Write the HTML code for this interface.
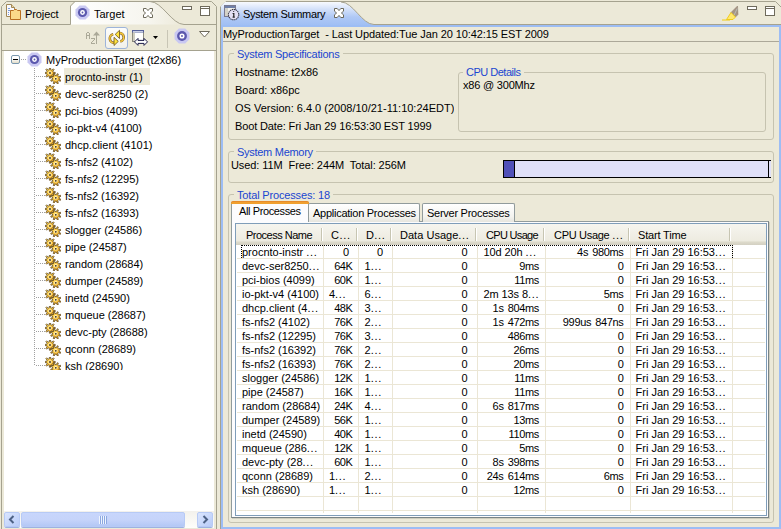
<!DOCTYPE html>
<html><head><meta charset="utf-8">
<style>
*{margin:0;padding:0;box-sizing:border-box}
html,body{width:781px;height:529px;overflow:hidden;background:#ECE9D8;font-family:"Liberation Sans",sans-serif;font-size:11px;color:#000;position:relative}
.a{position:absolute}
.t{position:absolute;white-space:nowrap;line-height:13px}
</style></head><body>
<svg width="0" height="0" style="position:absolute"><defs>
<linearGradient id="gy" x1="0" y1="0" x2="1" y2="1"><stop offset="0" stop-color="#FFE468"/><stop offset="1" stop-color="#F2A41C"/></linearGradient>
<g id="tgt"><path d="M4.5,0.5 H10.5 L14.5,4.5 V10.5 L10.5,14.5 H4.5 L0.5,10.5 V4.5 Z" fill="#C9C8F2"/><circle cx="7.5" cy="7.5" r="4.6" fill="#5B58AE"/><circle cx="7.5" cy="7.5" r="2.4" fill="#fff"/><circle cx="7.5" cy="7.5" r="0.9" fill="#5B58AE"/></g>
<g id="gear"><path d="M8.33,4.34 L10.27,4.43 L10.27,5.57 L8.33,5.66 L7.83,6.89 L9.13,8.32 L8.32,9.13 L6.89,7.83 L5.66,8.33 L5.57,10.27 L4.43,10.27 L4.34,8.33 L3.11,7.83 L1.68,9.13 L0.87,8.32 L2.17,6.89 L1.67,5.66 L-0.27,5.57 L-0.27,4.43 L1.67,4.34 L2.17,3.11 L0.87,1.68 L1.68,0.87 L3.11,2.17 L4.34,1.67 L4.43,-0.27 L5.57,-0.27 L5.66,1.67 L6.89,2.17 L8.32,0.87 L9.13,1.68 L7.83,3.11Z" fill="url(#gy)" stroke="#4A3410" stroke-width="0.7"/><circle cx="5" cy="5" r="1.8" fill="#FFF2B8"/><circle cx="5" cy="5" r="0.9" fill="#3A2A10"/><path d="M14.13,11.46 L15.89,12.29 L15.45,13.34 L13.63,12.69 L12.69,13.63 L13.34,15.45 L12.29,15.89 L11.46,14.13 L10.14,14.13 L9.31,15.89 L8.26,15.45 L8.91,13.63 L7.97,12.69 L6.15,13.34 L5.71,12.29 L7.47,11.46 L7.47,10.14 L5.71,9.31 L6.15,8.26 L7.97,8.91 L8.91,7.97 L8.26,6.15 L9.31,5.71 L10.14,7.47 L11.46,7.47 L12.29,5.71 L13.34,6.15 L12.69,7.97 L13.63,8.91 L15.45,8.26 L15.89,9.31 L14.13,10.14Z" fill="url(#gy)" stroke="#4A3410" stroke-width="0.7"/><circle cx="10.8" cy="10.8" r="1.8" fill="#FFF2B8"/><circle cx="10.8" cy="10.8" r="0.9" fill="#3A2A10"/></g>
</defs></svg>
<svg class="a" style="left:0;top:0" width="219" height="529">
<defs><linearGradient id="tg" x1="0" y1="0" x2="1" y2="0"><stop offset="0" stop-color="#fff"/><stop offset="0.7" stop-color="#F6F5EE"/><stop offset="1" stop-color="#ECE9D8"/></linearGradient></defs>
<path d="M1.5,529 V6.5 L6.5,1.5 H211.5 L216.5,6.5 V529" fill="none" stroke="#A5A28F"/>
<path d="M71,24.5 V6 L75,2 H150 C162,2 172,24.5 184,24.5 Z" fill="url(#tg)"/>
<path d="M1.5,24.5 H70.5 V6 L75,1.5" fill="none" stroke="#A5A28F"/><path d="M150,1.5 C162,1.5 172,24.5 184,24.5 H216.5" fill="none" stroke="#A5A28F"/>
</svg>
<svg class="a" style="left:6px;top:4px" width="16" height="17" viewBox="0 0 16 17">
<path d="M0.5,0.5 H5.5 L8.5,3.5 V12.5 H0.5 Z" fill="#F8F8FF" stroke="#A08858"/>
<path d="M5.5,0.5 V3.5 H8.5" fill="#EED8A0" stroke="#A08858"/>
<path d="M2,4.5 H4 M2,6.5 H5 M2,8.5 H3 M2,10.5 H3" stroke="#7C9CD8"/>
<path d="M4.5,6.5 H7.5 L8.5,5.5 H10.5 L11.5,6.5 H14.5 V15.5 H4.5 Z" fill="#FBD98A" stroke="#B86E20"/>
</svg>
<div class="t" style="top:8px;left:25px;letter-spacing:-0.100px;">Project</div>
<svg class="a" style="left:75px;top:5px" width="15" height="15" viewBox="0 0 15 15"><use href="#tgt"/></svg>
<div class="t" style="top:8px;left:94px;">Target</div>
<svg class="a" style="left:143px;top:8px" width="10" height="10" viewBox="0 0 10 10">
<path d="M0.5,0.5 H3.2 L5,2.6 L6.8,0.5 H9.5 V3.2 L7.4,5 L9.5,6.8 V9.5 H6.8 L5,7.4 L3.2,9.5 H0.5 V6.8 L2.6,5 L0.5,3.2 Z" fill="#fff" stroke="#5E5A4A" stroke-width="0.9"/>
</svg>
<div class="a" style="left:182px;top:6px;width:10px;height:4px;border:1px solid #6E6A5C;background:#fff"></div>
<div class="a" style="left:200px;top:6px;width:10px;height:10px;border:1px solid #6E6A5C;background:#fff;box-shadow:inset 0 1px 0 #fff,inset 0 2px 0 #6E6A5C"></div>
<svg class="a" style="left:85px;top:31px" width="16" height="14" viewBox="0 0 16 14" shape-rendering="crispEdges">
<g fill="#ABA998">
<rect x="1" y="2" width="1" height="6"/><rect x="4" y="2" width="1" height="6"/><rect x="2" y="1" width="2" height="1"/><rect x="2" y="4" width="2" height="1"/>
<rect x="6" y="7" width="4" height="1"/><rect x="6" y="12" width="4" height="1"/><rect x="9" y="8" width="1" height="1"/><rect x="8" y="9" width="1" height="1"/><rect x="7" y="10" width="1" height="1"/><rect x="6" y="11" width="1" height="1"/>
<rect x="11" y="3" width="1" height="10"/>
</g>
<path d="M8,4.5 L11.5,0.5 L15,4.5 Z" fill="#ABA998" shape-rendering="auto"/>
</svg>
<div class="a" style="left:105px;top:27px;width:23px;height:22px;border:1px solid #9DB4DA;border-radius:3px;background:linear-gradient(#FDFDFB,#F2F1EA)"></div>
<svg class="a" style="left:108px;top:29px" width="17" height="17" viewBox="0 0 17 17">
<g id="sarr">
<path d="M11.2,4 A4.3,4.3 0 0 1 12.3,12.5" stroke="#8A6A30" stroke-width="2.6" fill="none"/>
<path d="M11.2,4 A4.3,4.3 0 0 1 12.3,12.5" stroke="#F5C838" stroke-width="1.3" fill="none"/>
<path d="M11.5,1.3 L7.2,5.4 L11.5,9.5 Z" fill="#FFE43C" stroke="#6A5020" stroke-width="0.8" stroke-linejoin="round"/>
</g>
<use href="#sarr" transform="rotate(180 8.75 8.9)"/>
</svg>
<svg class="a" style="left:132px;top:29px" width="17" height="18" viewBox="0 0 17 18">
<rect x="0.5" y="1.5" width="11" height="11" fill="#fff" stroke="#8C8A7E"/>
<rect x="0" y="1" width="12" height="2.5" fill="#55609A"/>
<rect x="1" y="2" width="10" height="0.8" fill="#E8ECF8"/>
<rect x="1" y="3.5" width="2" height="8.5" fill="#CFCDBF"/>
<path d="M2.5,12.9 L6,9.4 V11.4 H12 V9.4 L15.5,12.9 L12,16.4 V14.4 H6 V16.4 Z" fill="#fff" stroke="#1E1E4A" stroke-linejoin="miter"/>
</svg>
<svg class="a" style="left:153px;top:36px" width="6" height="3"><path d="M0,0 H5 L2.5,3 Z" fill="#000"/></svg>
<div class="a" style="left:167px;top:30px;width:1px;height:18px;background:#C8C5B5"></div>
<svg class="a" style="left:174px;top:28px" width="16" height="16" viewBox="0 0 15 15"><use href="#tgt"/></svg>
<svg class="a" style="left:199px;top:31px" width="12" height="7"><path d="M0.5,0.5 H10.5 L5.5,6 Z" fill="#fff" stroke="#6E6A5C"/></svg>
<div class="a" style="left:2px;top:50px;width:214px;height:1px;background:#A5A28F"></div>
<div class="a" style="left:4px;top:51px;width:210px;height:461px;background:#fff"></div>
<div class="a" style="left:0;top:0;width:214px;height:370px;overflow:hidden">
<div class="a" style="left:11px;top:55px;width:9px;height:9px;border:1px solid #7A98AF;border-radius:2px;background:linear-gradient(#fff 40%,#E2DCC8)"></div>
<div class="a" style="left:13px;top:59px;width:5px;height:1px;background:#000"></div>
<div class="a" style="left:21px;top:59px;width:6px;height:1px;background:repeating-linear-gradient(90deg,#A0A0A0 0 1px,transparent 1px 2px)"></div>
<svg class="a" style="left:27px;top:52px" width="15" height="15" viewBox="0 0 15 15"><use href="#tgt"/></svg>
<div class="t" style="top:54px;left:46px;">MyProductionTarget (t2x86)</div>
<div class="a" style="left:34px;top:68px;width:1px;height:298px;background:repeating-linear-gradient(#A0A0A0 0 1px,transparent 1px 2px)"></div>
<div class="a" style="left:36px;top:76px;width:9px;height:1px;background:repeating-linear-gradient(90deg,#A0A0A0 0 1px,transparent 1px 2px)"></div>
<svg class="a" style="left:45px;top:68px" width="16" height="16" viewBox="0 0 16 16"><use href="#gear"/></svg>
<div class="a" style="left:64px;top:68px;width:86px;height:17px;background:#ECE9D8"></div>
<div class="t" style="top:71px;left:65px;">procnto-instr (1)</div>
<div class="a" style="left:36px;top:93px;width:9px;height:1px;background:repeating-linear-gradient(90deg,#A0A0A0 0 1px,transparent 1px 2px)"></div>
<svg class="a" style="left:45px;top:85px" width="16" height="16" viewBox="0 0 16 16"><use href="#gear"/></svg>
<div class="t" style="top:88px;left:65px;">devc-ser8250 (2)</div>
<div class="a" style="left:36px;top:110px;width:9px;height:1px;background:repeating-linear-gradient(90deg,#A0A0A0 0 1px,transparent 1px 2px)"></div>
<svg class="a" style="left:45px;top:102px" width="16" height="16" viewBox="0 0 16 16"><use href="#gear"/></svg>
<div class="t" style="top:105px;left:65px;">pci-bios (4099)</div>
<div class="a" style="left:36px;top:127px;width:9px;height:1px;background:repeating-linear-gradient(90deg,#A0A0A0 0 1px,transparent 1px 2px)"></div>
<svg class="a" style="left:45px;top:119px" width="16" height="16" viewBox="0 0 16 16"><use href="#gear"/></svg>
<div class="t" style="top:122px;left:65px;">io-pkt-v4 (4100)</div>
<div class="a" style="left:36px;top:144px;width:9px;height:1px;background:repeating-linear-gradient(90deg,#A0A0A0 0 1px,transparent 1px 2px)"></div>
<svg class="a" style="left:45px;top:136px" width="16" height="16" viewBox="0 0 16 16"><use href="#gear"/></svg>
<div class="t" style="top:139px;left:65px;">dhcp.client (4101)</div>
<div class="a" style="left:36px;top:161px;width:9px;height:1px;background:repeating-linear-gradient(90deg,#A0A0A0 0 1px,transparent 1px 2px)"></div>
<svg class="a" style="left:45px;top:153px" width="16" height="16" viewBox="0 0 16 16"><use href="#gear"/></svg>
<div class="t" style="top:156px;left:65px;">fs-nfs2 (4102)</div>
<div class="a" style="left:36px;top:178px;width:9px;height:1px;background:repeating-linear-gradient(90deg,#A0A0A0 0 1px,transparent 1px 2px)"></div>
<svg class="a" style="left:45px;top:170px" width="16" height="16" viewBox="0 0 16 16"><use href="#gear"/></svg>
<div class="t" style="top:173px;left:65px;">fs-nfs2 (12295)</div>
<div class="a" style="left:36px;top:195px;width:9px;height:1px;background:repeating-linear-gradient(90deg,#A0A0A0 0 1px,transparent 1px 2px)"></div>
<svg class="a" style="left:45px;top:187px" width="16" height="16" viewBox="0 0 16 16"><use href="#gear"/></svg>
<div class="t" style="top:190px;left:65px;">fs-nfs2 (16392)</div>
<div class="a" style="left:36px;top:212px;width:9px;height:1px;background:repeating-linear-gradient(90deg,#A0A0A0 0 1px,transparent 1px 2px)"></div>
<svg class="a" style="left:45px;top:204px" width="16" height="16" viewBox="0 0 16 16"><use href="#gear"/></svg>
<div class="t" style="top:207px;left:65px;">fs-nfs2 (16393)</div>
<div class="a" style="left:36px;top:229px;width:9px;height:1px;background:repeating-linear-gradient(90deg,#A0A0A0 0 1px,transparent 1px 2px)"></div>
<svg class="a" style="left:45px;top:221px" width="16" height="16" viewBox="0 0 16 16"><use href="#gear"/></svg>
<div class="t" style="top:224px;left:65px;">slogger (24586)</div>
<div class="a" style="left:36px;top:246px;width:9px;height:1px;background:repeating-linear-gradient(90deg,#A0A0A0 0 1px,transparent 1px 2px)"></div>
<svg class="a" style="left:45px;top:238px" width="16" height="16" viewBox="0 0 16 16"><use href="#gear"/></svg>
<div class="t" style="top:241px;left:65px;">pipe (24587)</div>
<div class="a" style="left:36px;top:263px;width:9px;height:1px;background:repeating-linear-gradient(90deg,#A0A0A0 0 1px,transparent 1px 2px)"></div>
<svg class="a" style="left:45px;top:255px" width="16" height="16" viewBox="0 0 16 16"><use href="#gear"/></svg>
<div class="t" style="top:258px;left:65px;">random (28684)</div>
<div class="a" style="left:36px;top:280px;width:9px;height:1px;background:repeating-linear-gradient(90deg,#A0A0A0 0 1px,transparent 1px 2px)"></div>
<svg class="a" style="left:45px;top:272px" width="16" height="16" viewBox="0 0 16 16"><use href="#gear"/></svg>
<div class="t" style="top:275px;left:65px;">dumper (24589)</div>
<div class="a" style="left:36px;top:297px;width:9px;height:1px;background:repeating-linear-gradient(90deg,#A0A0A0 0 1px,transparent 1px 2px)"></div>
<svg class="a" style="left:45px;top:289px" width="16" height="16" viewBox="0 0 16 16"><use href="#gear"/></svg>
<div class="t" style="top:292px;left:65px;">inetd (24590)</div>
<div class="a" style="left:36px;top:314px;width:9px;height:1px;background:repeating-linear-gradient(90deg,#A0A0A0 0 1px,transparent 1px 2px)"></div>
<svg class="a" style="left:45px;top:306px" width="16" height="16" viewBox="0 0 16 16"><use href="#gear"/></svg>
<div class="t" style="top:309px;left:65px;">mqueue (28687)</div>
<div class="a" style="left:36px;top:331px;width:9px;height:1px;background:repeating-linear-gradient(90deg,#A0A0A0 0 1px,transparent 1px 2px)"></div>
<svg class="a" style="left:45px;top:323px" width="16" height="16" viewBox="0 0 16 16"><use href="#gear"/></svg>
<div class="t" style="top:326px;left:65px;">devc-pty (28688)</div>
<div class="a" style="left:36px;top:348px;width:9px;height:1px;background:repeating-linear-gradient(90deg,#A0A0A0 0 1px,transparent 1px 2px)"></div>
<svg class="a" style="left:45px;top:340px" width="16" height="16" viewBox="0 0 16 16"><use href="#gear"/></svg>
<div class="t" style="top:343px;left:65px;">qconn (28689)</div>
<div class="a" style="left:36px;top:365px;width:9px;height:1px;background:repeating-linear-gradient(90deg,#A0A0A0 0 1px,transparent 1px 2px)"></div>
<svg class="a" style="left:45px;top:357px" width="16" height="16" viewBox="0 0 16 16"><use href="#gear"/></svg>
<div class="t" style="top:360px;left:65px;">ksh (28690)</div>
</div>
<div class="a" style="left:4px;top:511px;width:210px;height:17px;background:linear-gradient(#F3F1EC,#FEFEFB)"></div>
<div class="a" style="left:4px;top:512px;width:16px;height:15px;border:1px solid #B7CAF5;border-radius:2px;background:linear-gradient(135deg,#DAE5FE,#B9CCF8);box-shadow:0 1px 0 #9DB2E0"></div>
<svg class="a" style="left:8px;top:515px" width="7" height="9"><path d="M5.5,1 L2,4.5 L5.5,8" stroke="#4D6185" stroke-width="2" fill="none"/></svg>
<div class="a" style="left:21px;top:512px;width:164px;height:15px;border:1px solid #B7CAF5;border-radius:2px;background:linear-gradient(135deg,#DAE5FE,#B9CCF8);background:linear-gradient(#C8D6FC,#C6D4FA 50%,#B4C8F6);box-shadow:0 1px 0 #9DB2E0"></div>
<div class="a" style="left:99px;top:516px;width:8px;height:8px;background:repeating-linear-gradient(90deg,#EEF4FE 0 1px,#8CA8E0 1px 2px)"></div>
<div class="a" style="left:197px;top:512px;width:16px;height:15px;border:1px solid #B7CAF5;border-radius:2px;background:linear-gradient(135deg,#DAE5FE,#B9CCF8);box-shadow:0 1px 0 #9DB2E0"></div>
<svg class="a" style="left:202px;top:515px" width="7" height="9"><path d="M1.5,1 L5,4.5 L1.5,8" stroke="#4D6185" stroke-width="2" fill="none"/></svg>
<svg class="a" style="left:216px;top:0" width="565" height="529">
<defs><linearGradient id="sg" x1="0" y1="0" x2="0" y2="1"><stop offset="0" stop-color="#F8FAFE"/><stop offset="0.25" stop-color="#D8E4FA"/><stop offset="0.6" stop-color="#AFC8F5"/><stop offset="1" stop-color="#9DBDF4"/></linearGradient></defs>
<path d="M4.5,529 V7 L10,1.5 H559.5 L565,7" fill="none" stroke="#A5A28F"/>
<path d="M5,27 V6 L9,2 H125 C137,2 146,24.5 158,24.5 H565 V27 Z" fill="url(#sg)"/>
<path d="M125,2 C137,2 146,24.5 158,24.5 H565" fill="none" stroke="#A5A28F"/>
</svg>
<div class="a" style="left:221px;top:25px;width:560px;height:504px;border:2px solid #9DBDF4"></div>
<svg class="a" style="left:224px;top:5px" width="16" height="16" viewBox="0 0 16 16">
<rect x="0.5" y="0.5" width="11" height="11" fill="#F4F4F0" stroke="#7A7A90"/>
<rect x="1" y="1" width="10" height="2" fill="#6E7FA8"/>
<rect x="1" y="3" width="3" height="8" fill="#D4D2C8"/>
<circle cx="9.6" cy="9.6" r="5.2" fill="#E4E0F4" stroke="#3A3A4A" stroke-width="1.1" stroke-dasharray="1.4 0.6"/>
<path d="M9.6,6.2 V6.9 M8.6,8.5 H9.8 V12.2 M8.6,12.2 H10.8" stroke="#222" stroke-width="1.2" fill="none"/>
</svg>
<div class="t" style="top:8px;left:243px;letter-spacing:-0.330px;">System Summary</div>
<svg class="a" style="left:334px;top:8px" width="10" height="10" viewBox="0 0 10 10">
<path d="M0.5,0.5 H3.2 L5,2.6 L6.8,0.5 H9.5 V3.2 L7.4,5 L9.5,6.8 V9.5 H6.8 L5,7.4 L3.2,9.5 H0.5 V6.8 L2.6,5 L0.5,3.2 Z" fill="#fff" stroke="#5E5A4A" stroke-width="0.9"/>
</svg>
<svg class="a" style="left:721px;top:5px" width="18" height="17" viewBox="0 0 18 17">
<path d="M16.5,1 L17,9.5 L14.5,12 L10,7.5 Z" fill="#A69484" stroke="#8A7A6A" stroke-width="0.5"/>
<path d="M16.2,3.5 L13.2,10" stroke="#BCC8C4" stroke-width="0.8"/>
<path d="M10,7.5 L14.5,12 L12,14.5 L5.5,14.5 Z" fill="#FFE870" stroke="#EEC400" stroke-width="0.8"/>
<path d="M1,15 H9" stroke="#F2CC10" stroke-width="1"/>
</svg>
<div class="a" style="left:747px;top:6px;width:10px;height:4px;border:1px solid #6E6A5C;background:#fff"></div>
<div class="a" style="left:765px;top:6px;width:10px;height:10px;border:1px solid #6E6A5C;background:#fff;box-shadow:inset 0 1px 0 #fff,inset 0 2px 0 #6E6A5C"></div>
<div class="t" style="top:28px;left:223px;letter-spacing:-0.090px;">MyProductionTarget&nbsp; - Last Updated:Tue Jan 20 10:42:15 EST 2009</div>
<div class="a" style="left:223px;top:41px;width:556px;height:1px;background:#ACA899"></div>
<div class="a" style="left:228px;top:53px;width:546px;height:87px;border:1px solid #C6C3B0;border-radius:3px"></div>
<div class="a" style="left:234px;top:52px;width:109px;height:4px;background:#ECE9D8"></div>
<div class="t" style="top:48px;left:237px;letter-spacing:-0.243px;color:#1A46D0;">System Specifications</div>
<div class="t" style="top:66px;left:235px;">Hostname: t2x86</div>
<div class="t" style="top:84px;left:235px;">Board: x86pc</div>
<div class="a" style="left:235px;top:100px;width:219px;height:16px;overflow:hidden">
<div class="t" style="top:2px;left:0px;">OS Version: 6.4.0 (2008/10/21-11:10:24EDT)</div>
</div>
<div class="t" style="top:120px;left:235px;letter-spacing:-0.130px;">Boot Date: Fri Jan 29 16:53:30 EST 1999</div>
<div class="a" style="left:458px;top:72px;width:308px;height:60px;border:1px solid #C6C3B0;border-radius:3px"></div>
<div class="a" style="left:463px;top:71px;width:61px;height:4px;background:#ECE9D8"></div>
<div class="t" style="top:66px;left:466px;letter-spacing:-0.500px;color:#1A46D0;">CPU Details</div>
<div class="t" style="top:79px;left:463px;letter-spacing:-0.200px;">x86 @ 300Mhz</div>
<div class="a" style="left:228px;top:151px;width:546px;height:32px;border:1px solid #C6C3B0;border-radius:3px"></div>
<div class="a" style="left:234px;top:150px;width:82px;height:4px;background:#ECE9D8"></div>
<div class="t" style="top:146px;left:237px;letter-spacing:-0.280px;color:#1A46D0;">System Memory</div>
<div class="t" style="top:159px;left:231px;letter-spacing:-0.080px;">Used: 11M&nbsp; Free: 244M&nbsp; Total: 256M</div>
<div class="a" style="left:503px;top:160px;width:268px;height:18px;border:1px solid #000;border-right:none;background:#E0E0F8"></div>
<div class="a" style="left:768px;top:161px;width:1px;height:16px;background:#000"></div>
<div class="a" style="left:504px;top:161px;width:11px;height:16px;background:#5050B8;border-right:1px solid #000"></div>
<div class="a" style="left:228px;top:194px;width:546px;height:329px;border:1px solid #C6C3B0;border-radius:3px"></div>
<div class="a" style="left:234px;top:193px;width:99px;height:4px;background:#ECE9D8"></div>
<div class="t" style="top:189px;left:237px;letter-spacing:-0.160px;color:#1A46D0;">Total Processes: 18</div>
<div class="a" style="left:231px;top:221px;width:538px;height:297px;border:1px solid #919B9C;border-right-color:#7A8486;border-bottom-color:#7A8486;box-shadow:1px 1px 0 #D0CEBF;background:#FCFCFE"></div>
<div class="a" style="left:308px;top:203px;width:112px;height:19px;border:1px solid #919B9C;border-bottom:none;border-radius:2px 2px 0 0;background:linear-gradient(#FFFFFF,#F3F3EF 70%,#E6E5DE)"></div>
<div class="t" style="top:207px;left:313px;letter-spacing:-0.257px;">Application Processes</div>
<div class="a" style="left:422px;top:203px;width:93px;height:19px;border:1px solid #919B9C;border-bottom:none;border-radius:2px 2px 0 0;background:linear-gradient(#FFFFFF,#F3F3EF 70%,#E6E5DE)"></div>
<div class="t" style="top:207px;left:427px;letter-spacing:-0.263px;">Server Processes</div>
<div class="a" style="left:231px;top:202px;width:78px;height:20px;border:1px solid #919B9C;border-top:none;border-bottom:none;background:#FCFCFE"></div>
<div class="a" style="left:231px;top:201px;width:78px;height:3px;background:#F0A030;border-radius:2px 2px 0 0;border-top:1px solid #E68B2C"></div>
<div class="t" style="top:205px;left:239px;letter-spacing:-0.385px;">All Processes</div>
<div class="a" style="left:235px;top:223px;width:532px;height:293px;border:1px solid #7F9DB9;background:#fff"></div>
<div class="a" style="left:236px;top:224px;width:530px;height:21px;background:linear-gradient(#F6F5EF,#EDEBE0 80%,#DDDACB 86%,#D3D0C2)"></div>
<div class="t" style="top:229px;left:246px;letter-spacing:-0.512px;">Process Name</div>
<div class="t" style="top:229px;left:331px;letter-spacing:0.468px;">C<span style="letter-spacing:0.7px">...</span></div>
<div class="t" style="top:229px;left:366px;letter-spacing:0.293px;">D<span style="letter-spacing:0.7px">...</span></div>
<div class="t" style="top:229px;left:400px;letter-spacing:0.025px;">Data Usage<span style="letter-spacing:0.7px">...</span></div>
<div class="t" style="top:229px;left:486px;letter-spacing:-0.676px;">CPU Usage</div>
<div class="t" style="top:229px;left:554px;letter-spacing:-0.301px;">CPU Usage <span style="letter-spacing:0.7px">...</span></div>
<div class="t" style="top:229px;left:638px;letter-spacing:-0.173px;">Start Time</div>
<div class="a" style="left:321px;top:228px;width:1px;height:13px;background:#C7C5B2"></div>
<div class="a" style="left:322px;top:228px;width:1px;height:13px;background:#fff"></div>
<div class="a" style="left:356px;top:228px;width:1px;height:13px;background:#C7C5B2"></div>
<div class="a" style="left:357px;top:228px;width:1px;height:13px;background:#fff"></div>
<div class="a" style="left:390px;top:228px;width:1px;height:13px;background:#C7C5B2"></div>
<div class="a" style="left:391px;top:228px;width:1px;height:13px;background:#fff"></div>
<div class="a" style="left:475px;top:228px;width:1px;height:13px;background:#C7C5B2"></div>
<div class="a" style="left:476px;top:228px;width:1px;height:13px;background:#fff"></div>
<div class="a" style="left:543px;top:228px;width:1px;height:13px;background:#C7C5B2"></div>
<div class="a" style="left:544px;top:228px;width:1px;height:13px;background:#fff"></div>
<div class="a" style="left:628px;top:228px;width:1px;height:13px;background:#C7C5B2"></div>
<div class="a" style="left:629px;top:228px;width:1px;height:13px;background:#fff"></div>
<div class="a" style="left:729px;top:228px;width:1px;height:13px;background:#C7C5B2"></div>
<div class="a" style="left:730px;top:228px;width:1px;height:13px;background:#fff"></div>
<div class="a" style="left:237px;top:258px;width:528px;height:1px;background:#EBE6D5"></div>
<div class="a" style="left:237px;top:272px;width:528px;height:1px;background:#EBE6D5"></div>
<div class="a" style="left:237px;top:286px;width:528px;height:1px;background:#EBE6D5"></div>
<div class="a" style="left:237px;top:300px;width:528px;height:1px;background:#EBE6D5"></div>
<div class="a" style="left:237px;top:314px;width:528px;height:1px;background:#EBE6D5"></div>
<div class="a" style="left:237px;top:328px;width:528px;height:1px;background:#EBE6D5"></div>
<div class="a" style="left:237px;top:342px;width:528px;height:1px;background:#EBE6D5"></div>
<div class="a" style="left:237px;top:356px;width:528px;height:1px;background:#EBE6D5"></div>
<div class="a" style="left:237px;top:370px;width:528px;height:1px;background:#EBE6D5"></div>
<div class="a" style="left:237px;top:384px;width:528px;height:1px;background:#EBE6D5"></div>
<div class="a" style="left:237px;top:398px;width:528px;height:1px;background:#EBE6D5"></div>
<div class="a" style="left:237px;top:412px;width:528px;height:1px;background:#EBE6D5"></div>
<div class="a" style="left:237px;top:426px;width:528px;height:1px;background:#EBE6D5"></div>
<div class="a" style="left:237px;top:440px;width:528px;height:1px;background:#EBE6D5"></div>
<div class="a" style="left:237px;top:454px;width:528px;height:1px;background:#EBE6D5"></div>
<div class="a" style="left:237px;top:468px;width:528px;height:1px;background:#EBE6D5"></div>
<div class="a" style="left:237px;top:482px;width:528px;height:1px;background:#EBE6D5"></div>
<div class="a" style="left:237px;top:496px;width:528px;height:1px;background:#EBE6D5"></div>
<div class="a" style="left:237px;top:510px;width:528px;height:1px;background:#EBE6D5"></div>
<div class="a" style="left:323px;top:245px;width:1px;height:268px;background:#EBE6D5"></div>
<div class="a" style="left:358px;top:245px;width:1px;height:268px;background:#EBE6D5"></div>
<div class="a" style="left:392px;top:245px;width:1px;height:268px;background:#EBE6D5"></div>
<div class="a" style="left:477px;top:245px;width:1px;height:268px;background:#EBE6D5"></div>
<div class="a" style="left:545px;top:245px;width:1px;height:268px;background:#EBE6D5"></div>
<div class="a" style="left:630px;top:245px;width:1px;height:268px;background:#EBE6D5"></div>
<div class="a" style="left:732px;top:245px;width:1px;height:268px;background:#EBE6D5"></div>
<div class="t" style="top:246px;left:242px;">procnto-instr <span style="letter-spacing:0.7px">...</span></div>
<div class="t" style="top:246px;right:432px;">0</div>
<div class="t" style="top:246px;right:398px;">0</div>
<div class="t" style="top:246px;right:313.5px;">0</div>
<div class="t" style="top:246px;left:483.5px;letter-spacing:-0.100px;">10d 20h <span style="letter-spacing:0.7px">...</span></div>
<div class="t" style="top:246px;right:157.5px;letter-spacing:-0.350px;word-spacing:1.5px;">4s 980ms</div>
<div class="t" style="top:246px;left:635.5px;">Fri Jan 29 16:53<span style="letter-spacing:0.7px">...</span></div>
<div class="t" style="top:260px;left:242px;">devc-ser8250<span style="letter-spacing:0.7px">...</span></div>
<div class="t" style="top:260px;right:428.5px;letter-spacing:-0.400px;">64K</div>
<div class="t" style="top:260px;left:364.5px;">1<span style="letter-spacing:0.7px">...</span></div>
<div class="t" style="top:260px;right:313.5px;">0</div>
<div class="t" style="top:260px;right:242px;letter-spacing:-0.350px;word-spacing:1.5px;">9ms</div>
<div class="t" style="top:260px;right:157.5px;letter-spacing:-0.350px;word-spacing:1.5px;">0</div>
<div class="t" style="top:260px;left:635.5px;">Fri Jan 29 16:53<span style="letter-spacing:0.7px">...</span></div>
<div class="t" style="top:274px;left:242px;">pci-bios (4099)</div>
<div class="t" style="top:274px;right:428.5px;letter-spacing:-0.400px;">60K</div>
<div class="t" style="top:274px;left:364.5px;">1<span style="letter-spacing:0.7px">...</span></div>
<div class="t" style="top:274px;right:313.5px;">0</div>
<div class="t" style="top:274px;right:242px;letter-spacing:-0.350px;word-spacing:1.5px;">11ms</div>
<div class="t" style="top:274px;right:157.5px;letter-spacing:-0.350px;word-spacing:1.5px;">0</div>
<div class="t" style="top:274px;left:635.5px;">Fri Jan 29 16:53<span style="letter-spacing:0.7px">...</span></div>
<div class="t" style="top:288px;left:242px;">io-pkt-v4 (4100)</div>
<div class="t" style="top:288px;left:329px;letter-spacing:-0.100px;">4<span style="letter-spacing:0.7px">...</span></div>
<div class="t" style="top:288px;left:364.5px;">6<span style="letter-spacing:0.7px">...</span></div>
<div class="t" style="top:288px;right:313.5px;">0</div>
<div class="t" style="top:288px;left:483.5px;letter-spacing:-0.100px;">2m 13s 8<span style="letter-spacing:0.7px">...</span></div>
<div class="t" style="top:288px;right:157.5px;letter-spacing:-0.350px;word-spacing:1.5px;">5ms</div>
<div class="t" style="top:288px;left:635.5px;">Fri Jan 29 16:53<span style="letter-spacing:0.7px">...</span></div>
<div class="t" style="top:302px;left:242px;">dhcp.client (4<span style="letter-spacing:0.7px">...</span></div>
<div class="t" style="top:302px;right:428.5px;letter-spacing:-0.400px;">48K</div>
<div class="t" style="top:302px;left:364.5px;">3<span style="letter-spacing:0.7px">...</span></div>
<div class="t" style="top:302px;right:313.5px;">0</div>
<div class="t" style="top:302px;right:242px;letter-spacing:-0.350px;word-spacing:1.5px;">1s 804ms</div>
<div class="t" style="top:302px;right:157.5px;letter-spacing:-0.350px;word-spacing:1.5px;">0</div>
<div class="t" style="top:302px;left:635.5px;">Fri Jan 29 16:53<span style="letter-spacing:0.7px">...</span></div>
<div class="t" style="top:316px;left:242px;">fs-nfs2 (4102)</div>
<div class="t" style="top:316px;right:428.5px;letter-spacing:-0.400px;">76K</div>
<div class="t" style="top:316px;left:364.5px;">2<span style="letter-spacing:0.7px">...</span></div>
<div class="t" style="top:316px;right:313.5px;">0</div>
<div class="t" style="top:316px;right:242px;letter-spacing:-0.350px;word-spacing:1.5px;">1s 472ms</div>
<div class="t" style="top:316px;right:157.5px;letter-spacing:-0.350px;word-spacing:1.5px;">999us 847ns</div>
<div class="t" style="top:316px;left:635.5px;">Fri Jan 29 16:53<span style="letter-spacing:0.7px">...</span></div>
<div class="t" style="top:330px;left:242px;">fs-nfs2 (12295)</div>
<div class="t" style="top:330px;right:428.5px;letter-spacing:-0.400px;">76K</div>
<div class="t" style="top:330px;left:364.5px;">3<span style="letter-spacing:0.7px">...</span></div>
<div class="t" style="top:330px;right:313.5px;">0</div>
<div class="t" style="top:330px;right:242px;letter-spacing:-0.350px;word-spacing:1.5px;">486ms</div>
<div class="t" style="top:330px;right:157.5px;letter-spacing:-0.350px;word-spacing:1.5px;">0</div>
<div class="t" style="top:330px;left:635.5px;">Fri Jan 29 16:53<span style="letter-spacing:0.7px">...</span></div>
<div class="t" style="top:344px;left:242px;">fs-nfs2 (16392)</div>
<div class="t" style="top:344px;right:428.5px;letter-spacing:-0.400px;">76K</div>
<div class="t" style="top:344px;left:364.5px;">2<span style="letter-spacing:0.7px">...</span></div>
<div class="t" style="top:344px;right:313.5px;">0</div>
<div class="t" style="top:344px;right:242px;letter-spacing:-0.350px;word-spacing:1.5px;">26ms</div>
<div class="t" style="top:344px;right:157.5px;letter-spacing:-0.350px;word-spacing:1.5px;">0</div>
<div class="t" style="top:344px;left:635.5px;">Fri Jan 29 16:53<span style="letter-spacing:0.7px">...</span></div>
<div class="t" style="top:358px;left:242px;">fs-nfs2 (16393)</div>
<div class="t" style="top:358px;right:428.5px;letter-spacing:-0.400px;">76K</div>
<div class="t" style="top:358px;left:364.5px;">2<span style="letter-spacing:0.7px">...</span></div>
<div class="t" style="top:358px;right:313.5px;">0</div>
<div class="t" style="top:358px;right:242px;letter-spacing:-0.350px;word-spacing:1.5px;">20ms</div>
<div class="t" style="top:358px;right:157.5px;letter-spacing:-0.350px;word-spacing:1.5px;">0</div>
<div class="t" style="top:358px;left:635.5px;">Fri Jan 29 16:53<span style="letter-spacing:0.7px">...</span></div>
<div class="t" style="top:372px;left:242px;">slogger (24586)</div>
<div class="t" style="top:372px;right:428.5px;letter-spacing:-0.400px;">12K</div>
<div class="t" style="top:372px;left:364.5px;">1<span style="letter-spacing:0.7px">...</span></div>
<div class="t" style="top:372px;right:313.5px;">0</div>
<div class="t" style="top:372px;right:242px;letter-spacing:-0.350px;word-spacing:1.5px;">11ms</div>
<div class="t" style="top:372px;right:157.5px;letter-spacing:-0.350px;word-spacing:1.5px;">0</div>
<div class="t" style="top:372px;left:635.5px;">Fri Jan 29 16:53<span style="letter-spacing:0.7px">...</span></div>
<div class="t" style="top:386px;left:242px;">pipe (24587)</div>
<div class="t" style="top:386px;right:428.5px;letter-spacing:-0.400px;">16K</div>
<div class="t" style="top:386px;left:364.5px;">1<span style="letter-spacing:0.7px">...</span></div>
<div class="t" style="top:386px;right:313.5px;">0</div>
<div class="t" style="top:386px;right:242px;letter-spacing:-0.350px;word-spacing:1.5px;">11ms</div>
<div class="t" style="top:386px;right:157.5px;letter-spacing:-0.350px;word-spacing:1.5px;">0</div>
<div class="t" style="top:386px;left:635.5px;">Fri Jan 29 16:53<span style="letter-spacing:0.7px">...</span></div>
<div class="t" style="top:400px;left:242px;">random (28684)</div>
<div class="t" style="top:400px;right:428.5px;letter-spacing:-0.400px;">24K</div>
<div class="t" style="top:400px;left:364.5px;">4<span style="letter-spacing:0.7px">...</span></div>
<div class="t" style="top:400px;right:313.5px;">0</div>
<div class="t" style="top:400px;right:242px;letter-spacing:-0.350px;word-spacing:1.5px;">6s 817ms</div>
<div class="t" style="top:400px;right:157.5px;letter-spacing:-0.350px;word-spacing:1.5px;">0</div>
<div class="t" style="top:400px;left:635.5px;">Fri Jan 29 16:53<span style="letter-spacing:0.7px">...</span></div>
<div class="t" style="top:414px;left:242px;">dumper (24589)</div>
<div class="t" style="top:414px;right:428.5px;letter-spacing:-0.400px;">56K</div>
<div class="t" style="top:414px;left:364.5px;">1<span style="letter-spacing:0.7px">...</span></div>
<div class="t" style="top:414px;right:313.5px;">0</div>
<div class="t" style="top:414px;right:242px;letter-spacing:-0.350px;word-spacing:1.5px;">13ms</div>
<div class="t" style="top:414px;right:157.5px;letter-spacing:-0.350px;word-spacing:1.5px;">0</div>
<div class="t" style="top:414px;left:635.5px;">Fri Jan 29 16:53<span style="letter-spacing:0.7px">...</span></div>
<div class="t" style="top:428px;left:242px;">inetd (24590)</div>
<div class="t" style="top:428px;right:428.5px;letter-spacing:-0.400px;">40K</div>
<div class="t" style="top:428px;left:364.5px;">1<span style="letter-spacing:0.7px">...</span></div>
<div class="t" style="top:428px;right:313.5px;">0</div>
<div class="t" style="top:428px;right:242px;letter-spacing:-0.350px;word-spacing:1.5px;">110ms</div>
<div class="t" style="top:428px;right:157.5px;letter-spacing:-0.350px;word-spacing:1.5px;">0</div>
<div class="t" style="top:428px;left:635.5px;">Fri Jan 29 16:53<span style="letter-spacing:0.7px">...</span></div>
<div class="t" style="top:442px;left:242px;">mqueue (286<span style="letter-spacing:0.7px">...</span></div>
<div class="t" style="top:442px;right:428.5px;letter-spacing:-0.400px;">12K</div>
<div class="t" style="top:442px;left:364.5px;">1<span style="letter-spacing:0.7px">...</span></div>
<div class="t" style="top:442px;right:313.5px;">0</div>
<div class="t" style="top:442px;right:242px;letter-spacing:-0.350px;word-spacing:1.5px;">5ms</div>
<div class="t" style="top:442px;right:157.5px;letter-spacing:-0.350px;word-spacing:1.5px;">0</div>
<div class="t" style="top:442px;left:635.5px;">Fri Jan 29 16:53<span style="letter-spacing:0.7px">...</span></div>
<div class="t" style="top:456px;left:242px;">devc-pty (28<span style="letter-spacing:0.7px">...</span></div>
<div class="t" style="top:456px;right:428.5px;letter-spacing:-0.400px;">60K</div>
<div class="t" style="top:456px;left:364.5px;">1<span style="letter-spacing:0.7px">...</span></div>
<div class="t" style="top:456px;right:313.5px;">0</div>
<div class="t" style="top:456px;right:242px;letter-spacing:-0.350px;word-spacing:1.5px;">8s 398ms</div>
<div class="t" style="top:456px;right:157.5px;letter-spacing:-0.350px;word-spacing:1.5px;">0</div>
<div class="t" style="top:456px;left:635.5px;">Fri Jan 29 16:53<span style="letter-spacing:0.7px">...</span></div>
<div class="t" style="top:470px;left:242px;">qconn (28689)</div>
<div class="t" style="top:470px;left:329px;letter-spacing:-0.100px;">1<span style="letter-spacing:0.7px">...</span></div>
<div class="t" style="top:470px;left:364.5px;">2<span style="letter-spacing:0.7px">...</span></div>
<div class="t" style="top:470px;right:313.5px;">0</div>
<div class="t" style="top:470px;right:242px;letter-spacing:-0.350px;word-spacing:1.5px;">24s 614ms</div>
<div class="t" style="top:470px;right:157.5px;letter-spacing:-0.350px;word-spacing:1.5px;">6ms</div>
<div class="t" style="top:470px;left:635.5px;">Fri Jan 29 16:53<span style="letter-spacing:0.7px">...</span></div>
<div class="t" style="top:484px;left:242px;">ksh (28690)</div>
<div class="t" style="top:484px;left:329px;letter-spacing:-0.100px;">1<span style="letter-spacing:0.7px">...</span></div>
<div class="t" style="top:484px;left:364.5px;">1<span style="letter-spacing:0.7px">...</span></div>
<div class="t" style="top:484px;right:313.5px;">0</div>
<div class="t" style="top:484px;right:242px;letter-spacing:-0.350px;word-spacing:1.5px;">12ms</div>
<div class="t" style="top:484px;right:157.5px;letter-spacing:-0.350px;word-spacing:1.5px;">0</div>
<div class="t" style="top:484px;left:635.5px;">Fri Jan 29 16:53<span style="letter-spacing:0.7px">...</span></div>
<div class="a" style="left:241px;top:245px;width:492px;height:13px;border:1px dotted #000;border-bottom:none"></div>
</body></html>
